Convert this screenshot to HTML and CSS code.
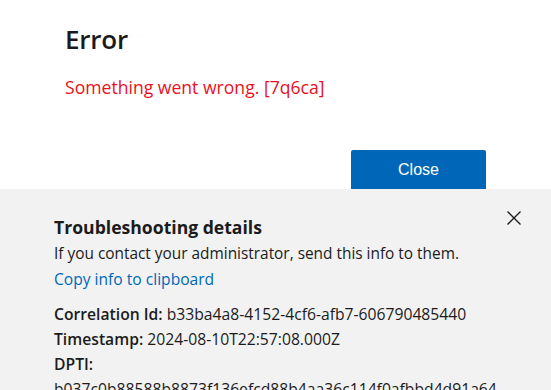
FILE: index.html
```html
<!DOCTYPE html>
<html lang="en">
<head>
  <meta charset="UTF-8">
  <title>Error</title>
  <meta name="viewport" content="width=device-width, initial-scale=1">
  <link rel="stylesheet" href="styles.css">
</head>
<body>
  <div class="dialog">
    <h1 class="title">Error</h1>
    <p class="message">Something went wrong. [7q6ca]</p>
    <div class="actions">
      <button class="close-btn" type="button">Close</button>
    </div>
  </div>

  <div class="details">
    <div class="details-head">
      <div class="details-text">
        <h2>Troubleshooting details</h2>
        <p class="hint">If you contact your administrator, send this info to them.</p>
        <a class="copy-link" href="#">Copy info to clipboard</a>
      </div>
      <button class="icon-btn" type="button" aria-label="Close">
        <svg width="14" height="14" viewBox="0 0 14 14">
          <path d="M0.5 0.5 L13.5 13.5 M13.5 0.5 L0.5 13.5" stroke="#1b1b1b" stroke-width="1.3" fill="none"/>
        </svg>
      </button>
    </div>

    <div class="info">
      <div class="row"><b>Correlation Id:</b> b33ba4a8-4152-4cf6-afb7-606790485440</div>
      <div class="row"><b>Timestamp:</b> 2024-08-10T22:57:08.000Z</div>
      <div class="row"><b>DPTI:</b></div>
      <div class="row hash">b037c0b88588b8873f136efcd88b4aa36c114f0afbbd4d91a64e7d0c2f5a19be83d44</div>
    </div>
  </div>
</body>
</html>
```

FILE: styles.css
```css
* {
  box-sizing: border-box;
}

body {
  margin: 0;
  font-family: "Open Sans", sans-serif;
  color: #1b1b1b;
  background: #ffffff;
  height: 390px;
  overflow: hidden;
}

.dialog {
  padding: 21px 65px 0 65px;
}

.title {
  margin: 0;
  font-size: 26px;
  font-weight: 600;
  line-height: 36px;
  letter-spacing: -0.2px;
}

.message {
  margin: 18px 0 0 0;
  font-size: 17.6px;
  line-height: 24px;
  color: #e81123;
}

.actions {
  display: flex;
  justify-content: flex-end;
  margin-top: 51px;
}

.close-btn {
  width: 135px;
  height: 39px;
  border: none;
  border-radius: 2px 2px 0 0;
  background: #0067b8;
  color: #ffffff;
  font-family: "Liberation Sans", Arial, sans-serif;
  font-size: 16px;
  line-height: 40px;
  padding: 0;
  cursor: pointer;
}

.details {
  background: #f2f2f2;
  padding: 22px 30px 0 54px;
  height: 201px;
}

.details-head {
  display: flex;
  align-items: flex-start;
}

.details-text {
  flex: 1;
}

.details h2 {
  margin: 3px 0 0 0;
  font-size: 17.6px;
  font-weight: 700;
  line-height: 26px;
}

.hint {
  margin: 1px 0 0 0;
  font-size: 15.4px;
  line-height: 26px;
}

.copy-link {
  display: block;
  font-size: 15.6px;
  line-height: 24px;
  color: #0067b8;
  text-decoration: none;
}

.icon-btn {
  border: none;
  background: none;
  padding: 0;
  width: 14px;
  height: 14px;
  display: flex;
  cursor: pointer;
}

.info {
  margin-top: 11px;
  padding-right: 18px;
}

.row {
  font-size: 15.7px;
  line-height: 25px;
}

.row b {
  font-weight: 600;
}

.hash {
  word-break: break-all;
}
```
